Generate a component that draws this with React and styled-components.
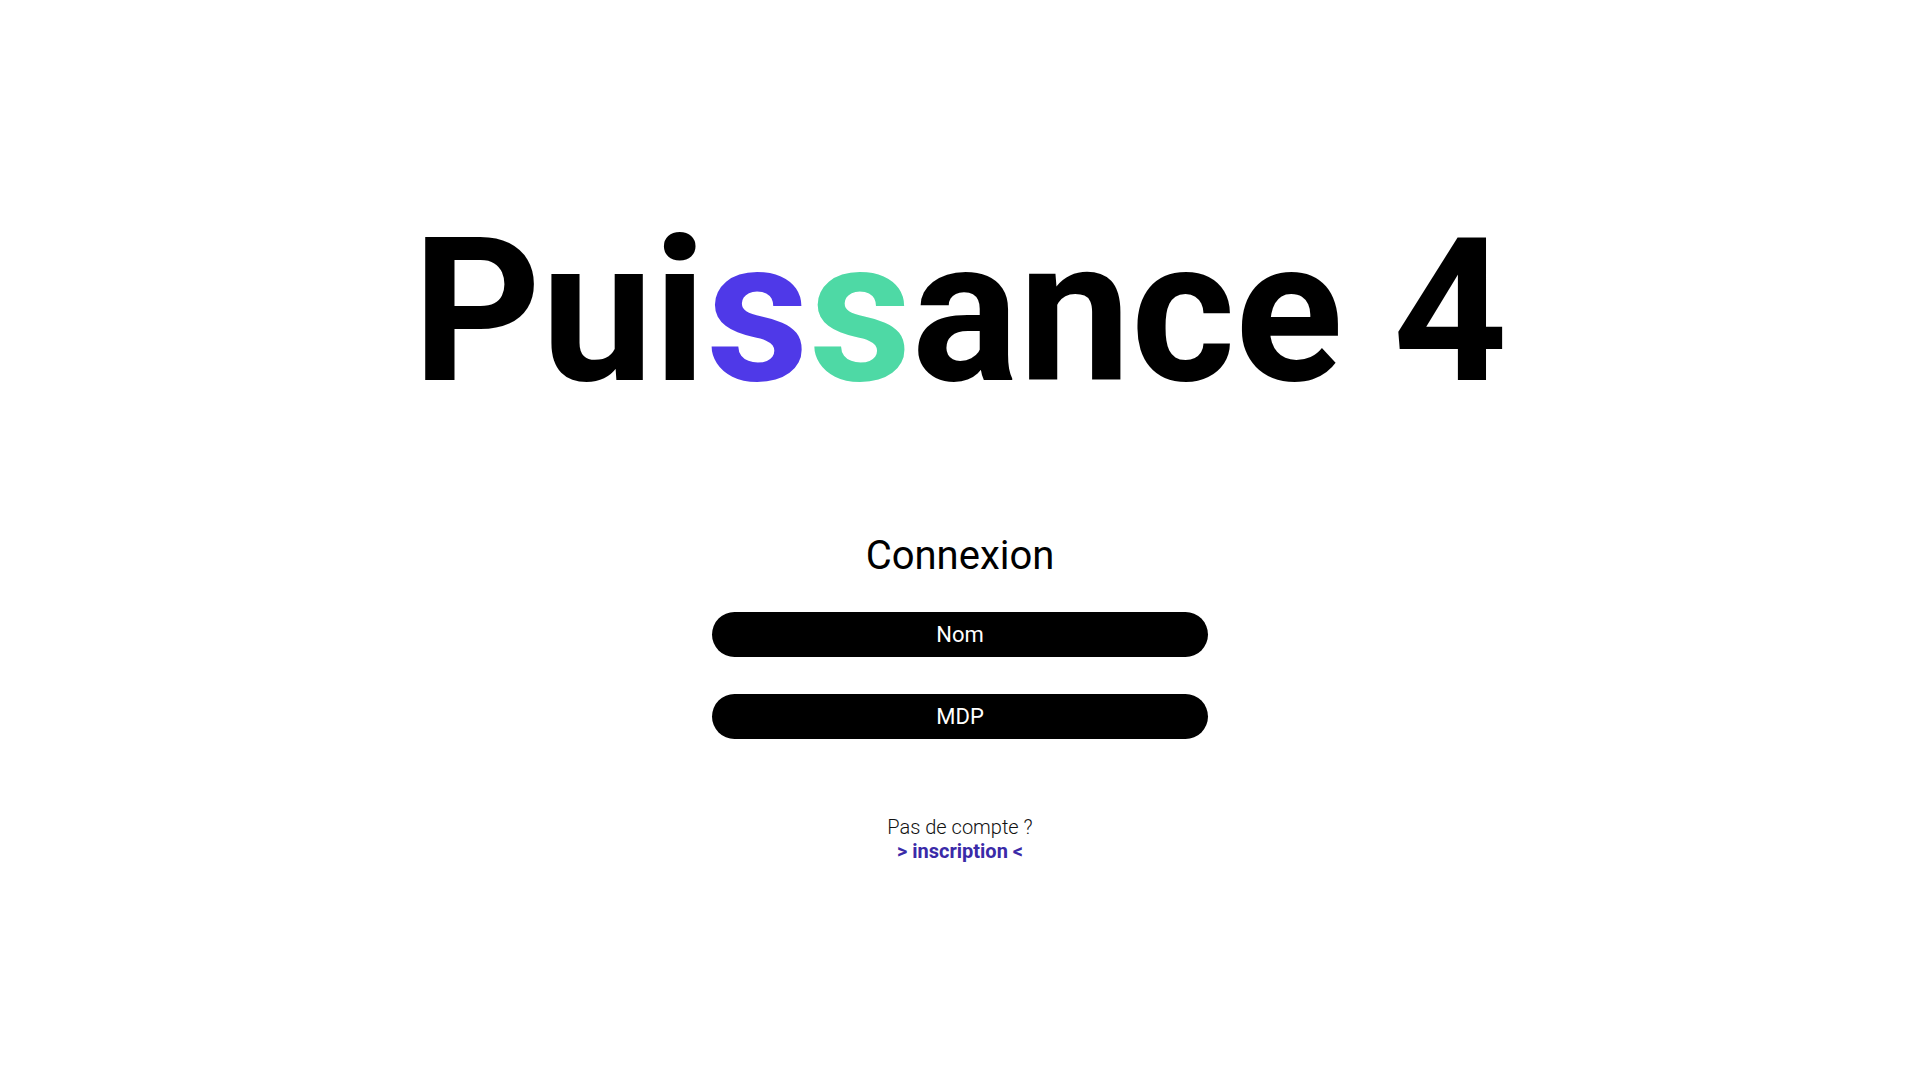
import React from "react";
import styled, { createGlobalStyle } from "styled-components";

const Global = createGlobalStyle`
  html, body { margin: 0; padding: 0; background: #ffffff; }
  body { font-family: Roboto, "Liberation Sans", sans-serif; color: #000; }
`;

const Page = styled.main`
  min-height: 1080px;
  display: flex;
  flex-direction: column;
  align-items: center;
  padding-top: 212px;
  box-sizing: border-box;
`;

const Title = styled.h1`
  margin: 0;
  font-family: Roboto, "Liberation Sans", sans-serif;
  font-weight: 700;
  font-size: 200px;
  line-height: 1;
  letter-spacing: 0;
  white-space: nowrap;
`;

const Accent = styled.span`
  color: ${(p) => p.$color};
`;

const Form = styled.form`
  margin-top: 124px;
  display: flex;
  flex-direction: column;
  align-items: center;
`;

const Heading = styled.h2`
  margin: 0;
  font-weight: 400;
  font-size: 40px;
  line-height: 1;
`;

const Fields = styled.div`
  margin-top: 36px;
  display: flex;
  flex-direction: column;
  gap: 37px;
`;

const Field = styled.input`
  width: 496px;
  height: 45px;
  box-sizing: border-box;
  border: none;
  border-radius: 23px;
  background: #000;
  color: #fff;
  font-family: Roboto, "Liberation Sans", sans-serif;
  font-size: 22px;
  text-align: center;
  outline: none;
  padding: 0 20px;
  &::placeholder { color: #fff; opacity: 1; }
`;

const Footer = styled.p`
  margin: 76px 0 0;
  text-align: center;
  font-size: 20px;
  line-height: 24px;
  font-weight: 300;
  color: #111;
`;

const SignupLink = styled.a`
  display: block;
  color: #3a2aa8;
  font-weight: 700;
  text-decoration: none;
`;

export default function App() {
  return (
    <>
      <Global />
      <Page>
        <Title>
          Pui<Accent $color="#4f39e8">s</Accent>
          <Accent $color="#4ed9a5">s</Accent>ance 4
        </Title>
        <Form onSubmit={(e) => e.preventDefault()}>
          <Heading>Connexion</Heading>
          <Fields>
            <Field type="text" placeholder="Nom" />
            <Field type="password" placeholder="MDP" />
          </Fields>
        </Form>
        <Footer>
          Pas de compte ?
          <SignupLink href="#">&gt; inscription &lt;</SignupLink>
        </Footer>
      </Page>
    </>
  );
}
